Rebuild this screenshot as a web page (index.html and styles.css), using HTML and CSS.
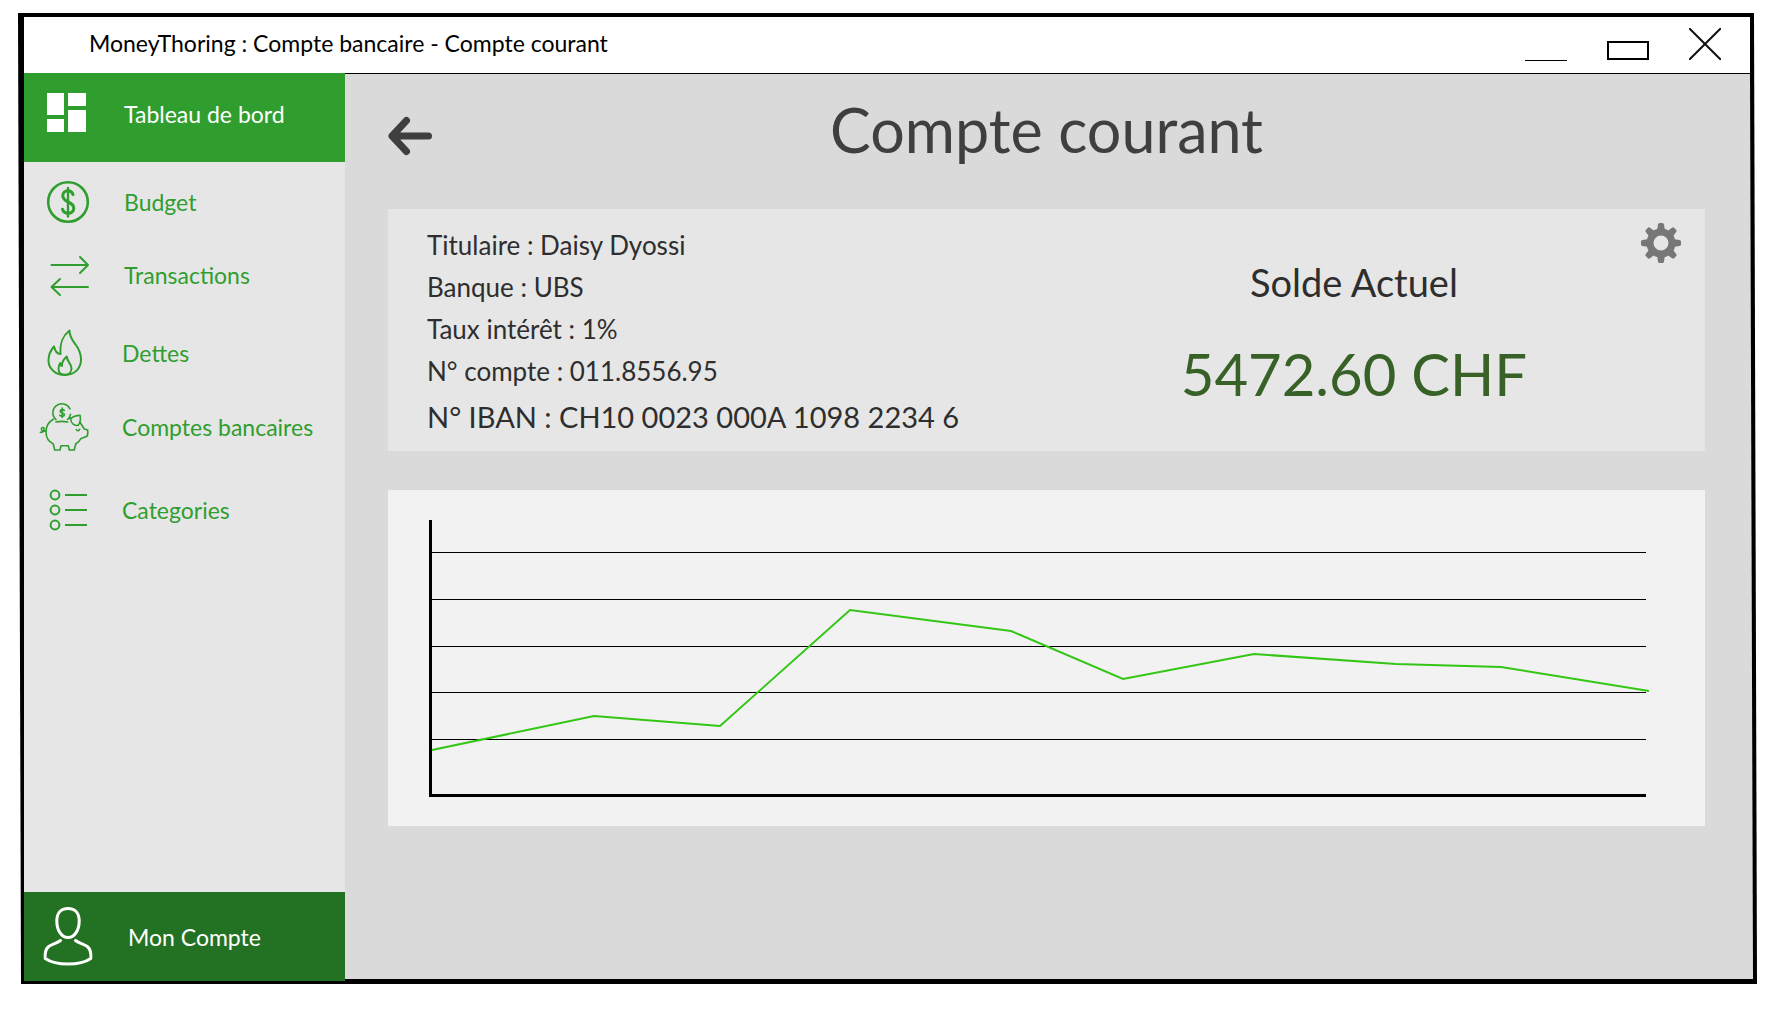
FILE: index.html
```html
<!DOCTYPE html>
<html lang="fr">
<head>
<meta charset="utf-8">
<meta name="viewport" content="width=device-width, initial-scale=1">
<title>MoneyThoring : Compte bancaire - Compte courant</title>
<link rel="stylesheet" href="styles.css">
</head>
<body>
<div class="window">
  <header class="titlebar">
    <span class="titlebar-text">MoneyThoring : Compte bancaire - Compte courant</span>
    <div class="controls">
      <button class="control" type="button" aria-label="Réduire">
        <svg class="icon" width="42" height="32" viewBox="0 0 42 32"><path d="M0 32.500H42" stroke="#000" stroke-width="1"/></svg>
      </button>
      <button class="control" type="button" aria-label="Agrandir">
        <svg width="42" height="32" viewBox="0 0 42 32"><rect x="1" y="14" width="40" height="17" fill="none" stroke="#000" stroke-width="2"/></svg>
      </button>
      <button class="control" type="button" aria-label="Fermer">
        <svg width="32" height="32" viewBox="0 0 32 32"><path d="M0 0L32 32M32 0L0 32" stroke="#111" stroke-width="2"/></svg>
      </button>
    </div>
  </header>

  <div class="body">
    <nav class="sidebar">
      <a class="nav-item nav-active" href="#">
        <svg class="icon" width="56" height="56" viewBox="0 0 56 56"><path fill="#fff" d="M15 7h17v22H15zM36 7h18v13H36zM15 33h17v13H15zM36 24h18v22H36z"/></svg>
        <span>Tableau de bord</span>
      </a>
      <a class="nav-item nav-budget" href="#">
        <svg class="icon" width="56" height="56" viewBox="0 0 56 56" fill="none" stroke="#2f9e2f" stroke-linecap="round"><circle cx="36" cy="28" r="19.800" stroke-width="2.600"/><path stroke-width="3" d="M41 20.500c-.8-2.600-2.500-3.700-5-3.700-3.200 0-5.200 2-5.200 4.900 0 3.300 2.300 4.700 5.200 6.200 3.300 1.700 5.800 3 5.800 6.200 0 3-2.300 5.200-5.700 5.200-2.700 0-4.800-1.300-5.600-4"/><path stroke-width="2.400" d="M36 14v28.500"/></svg>
        <span>Budget</span>
      </a>
      <a class="nav-item nav-transactions" href="#">
        <svg class="icon" width="56" height="56" viewBox="0 0 56 56" fill="none" stroke="#2f9e2f" stroke-width="2" stroke-linecap="round" stroke-linejoin="round"><path d="M19.500 18H56M48 10l8 8-8 8M56 40H19.500M28 32l-8.500 8 8.500 8"/></svg>
        <span>Transactions</span>
      </a>
      <a class="nav-item nav-lower nav-dettes" href="#">
        <svg class="icon" width="56" height="56" viewBox="0 0 56 56" fill="none" stroke="#2f9e2f" stroke-width="2" stroke-linejoin="round"><path d="M37.500 5.500c-7 5.500-9.800 12-9 23.500-3.500 0-5.500-3-6.500-7.500-4 4.500-5.500 8.500-5.500 14C16.500 44 24 50 33 50c9.500 0 16-6.500 16-15.500 0-5-1.500-9.500-5-14.500-3.500-5-6.500-7.500-6.500-14.500z"/><path d="M34.700 31.500c-3.500 3-4.800 6-4.700 9.500-1.300-.3-1.700-1.400-1.800-3-1.300 2-1.700 3.300-1.700 5.700 0 3.500 2.700 6 6.300 6 4 0 6.700-2.500 6.700-6.500 0-4.500-4-5.500-4.800-11.700z"/></svg>
        <span>Dettes</span>
      </a>
      <a class="nav-item nav-lower" href="#">
        <svg class="icon" width="56" height="56" viewBox="0 0 56 56" fill="none" stroke="#2f9e2f" stroke-width="1.600" stroke-linecap="round" stroke-linejoin="round"><path d="M21.300 20.300C16.500 23 14 28 14 33c0 5 2.700 9.700 7.300 12L22.700 51H28l1-4.300h7.300l1 4.300h5L43.700 45c2.600-1.500 4-3 5-5.300l6.300-2.400c.9-2 1-4.300.7-6.300l-3.400-1-4-6.300M24 23c4-.8 7.700-.8 11.700 0M24 20.600a9 9 0 1 1 14-10.700M35.500 20.300c1.800-1.300 2.700-3 3-5M36.500 19.800l2.200-.8"/><path d="M38.700 19.500c2.500-2 5.800-3 9.300-3.200.9 3.500.3 7-1.700 10-4.100.7-7.300-1.300-7.600-6.800zM44.300 30.500c.6 1.600 2.800 1.600 3.400-.2M14 32c-3.500.8-5.200-.8-4.500-2.600.8-1.600 3-.9 2.600 1.200-.3 1.800-1.800 2.900-3.800 2.700"/><path d="M32.200 11.500c-.8-1.400-4-1.300-4 .7 0 2.100 4.200 1.400 4.200 3.500 0 2-3.600 2-4.600.4M30.200 9v9.400"/></svg>
        <span>Comptes bancaires</span>
      </a>
      <a class="nav-item nav-lower nav-categories" href="#">
        <svg class="icon" width="56" height="56" viewBox="0 0 56 56" fill="none" stroke="#2f9e2f" stroke-width="2"><circle cx="23" cy="13" r="4.400"/><circle cx="23" cy="28" r="4.400"/><circle cx="23" cy="43" r="4.400"/><path d="M33 13h22M33 28h22M33 43h22"/></svg>
        <span>Categories</span>
      </a>
      <a class="nav-item nav-account" href="#">
        <svg class="icon" width="64" height="64" viewBox="0 0 64 64" fill="none" stroke="#fff" stroke-width="3" stroke-linecap="round" stroke-linejoin="round"><path d="M44 3.500c7.500 0 11.200 5 11.200 12.500 0 9-4.500 16.500-11.200 16.500S32.800 25 32.800 16C32.800 8.500 36.500 3.500 44 3.500z"/><path d="M36.500 35.500c-3.500 3-8 3.500-11.800 6-3 2.500-4 6-3.500 12C27 57.500 35 59 44 59s17-1.500 22.800-5.500c.5-6-.5-9.500-3.500-12-3.800-2.500-8.300-3-11.800-6"/></svg>
        <span>Mon Compte</span>
      </a>
    </nav>

    <main class="content">
      <div class="heading">
        <button class="back" type="button" aria-label="Retour">
          <svg width="44" height="40" viewBox="0 0 44 40" fill="none" stroke="#3f3f3f" stroke-linecap="round" stroke-linejoin="round"><path stroke-width="7" d="M18.500 4.500L4 20l14.500 15.500M6 20h34.500"/></svg>
        </button>
        <h1>Compte courant</h1>
      </div>

      <section class="card account">
        <div class="details">
          <p>Titulaire : Daisy Dyossi</p>
          <p>Banque : UBS</p>
          <p>Taux intérêt : 1%</p>
          <p>N° compte : 011.8556.95</p>
          <p class="iban">N° IBAN : CH10 0023 000A 1098 2234 6</p>
        </div>
        <div class="balance">
          <h2>Solde Actuel</h2>
          <p class="amount">5472.60 CHF</p>
        </div>
        <button class="settings" type="button" aria-label="Paramètres">
          <svg width="40" height="40" viewBox="-20 -20 40 40"><g fill="#777"><g id="teeth"><path id="tooth" d="M-4-12L-3-18.500Q-2.700-20-1.500-20h3Q2.700-20 3-18.500L4-12z"/><use href="#tooth" transform="rotate(45)"/><use href="#tooth" transform="rotate(90)"/><use href="#tooth" transform="rotate(135)"/></g><use href="#teeth" transform="rotate(180)"/></g><circle r="11" fill="none" stroke="#777" stroke-width="7"/></svg>
        </button>
      </section>

      <section class="card chart">
        <svg viewBox="0 0 1317 336" role="img" aria-label="Évolution du solde">
          <path d="M44 62.500H1258M44 109.500H1258M44 156.500H1258M44 202.500H1258M44 249.500H1258" stroke="#000" stroke-width="1"/>
          <path d="M42.500 30V305.500H1258" fill="none" stroke="#000" stroke-width="3"/>
          <path d="M44 260L206 226L332 236L462 120L623 141L735 189L866 164L1008 174L1113 177L1261 201" fill="none" stroke="#33c614" stroke-width="2"/>
        </svg>
      </section>
    </main>
  </div>
</div>
</body>
</html>
```
FILE: styles.css
```css
* {
  box-sizing: border-box;
}

body {
  display: flex;
  min-height: 100vh;
  margin: 0;
  padding: 13px 17px 26px 18px;
  background: #fff;
  font-family: Lato, "Noto Sans", sans-serif;
  font-size: 23px;
  color: #2e2e2e;
}

h1,
h2,
p {
  margin: 0;
  font-weight: 400;
}

button {
  padding: 0;
  border: 0;
  background: none;
  cursor: pointer;
}

svg {
  display: block;
}

/* The frame leans outwards a little towards the bottom right. */
.window {
  display: flex;
  flex: 1;
  flex-direction: column;
  padding: 4px 4px 3px 6px;
  background: #000;
  clip-path: polygon(0 0, calc(100% - 3px) 0, 100% 100%, 3px 100%);
}

.titlebar {
  display: flex;
  align-items: center;
  justify-content: space-between;
  height: 56px;
  margin-right: 3px;
  padding: 0 29px 0 65px;
  background: #fff;
  color: #000;
}

.titlebar-text {
  padding-bottom: 4px;
}

.controls {
  display: flex;
  gap: 40px;
  padding-bottom: 2px;
}

.body {
  display: flex;
  flex: 1;
}

.sidebar {
  display: flex;
  flex: none;
  flex-direction: column;
  width: 321px;
  background: #e6e6e6;
}

.nav-item {
  display: flex;
  align-items: center;
  gap: 36px;
  padding-left: 8px;
  height: 74px;
  color: #2f9e2f;
  text-decoration: none;
}

.icon {
  flex: none;
  overflow: visible;
}

.nav-active {
  height: 89px;
  margin-bottom: 3px;
  padding-bottom: 8px;
  background: #2f9e2f;
  color: #fff;
}

.nav-transactions {
  height: 72px;
}

.nav-lower {
  gap: 34px;
}

.nav-dettes {
  margin-top: 5px;
}

.nav-categories {
  margin-top: 9px;
}

.nav-account {
  height: 89px;
  margin-top: auto;
  padding-left: 0;
  gap: 40px;
  background: #237223;
  color: #fff;
}

.content {
  flex: 1;
  min-width: 0;
  margin-bottom: 2px;
  padding: 0 48px 24px 43px;
  border-top: 1px solid #000;
  background: #dadada;
  clip-path: polygon(0 0, calc(100% - 3px) 0, 100% 100%, 0 100%);
}

.heading {
  display: grid;
  grid-template-columns: 44px 1fr 44px;
  align-items: center;
  height: 135px;
  padding-bottom: 24px;
}

.heading h1 {
  font-size: 61px;
  line-height: 72px;
  text-align: center;
  color: #3f3f3f;
}

.back {
  margin-top: 12px;
}

.card {
  position: relative;
}

.account {
  display: flex;
  justify-content: space-between;
  min-height: 242px;
  padding: 15px 178px 9px 39px;
  background: #e6e6e6;
}

.details {
  font-size: 26px;
  line-height: 42px;
}

.iban {
  font-size: 29px;
  line-height: 50px;
}

.balance {
  padding-top: 34px;
  text-align: center;
}

.balance h2 {
  font-size: 38px;
  line-height: 48px;
}

.amount {
  margin-top: 32px;
  font-size: 58px;
  line-height: 72px;
  color: #376127;
}

.settings {
  position: absolute;
  top: 14px;
  right: 24px;
}

.chart {
  margin-top: 39px;
  background: #f2f2f2;
}

.chart svg {
  width: 100%;
}
```
